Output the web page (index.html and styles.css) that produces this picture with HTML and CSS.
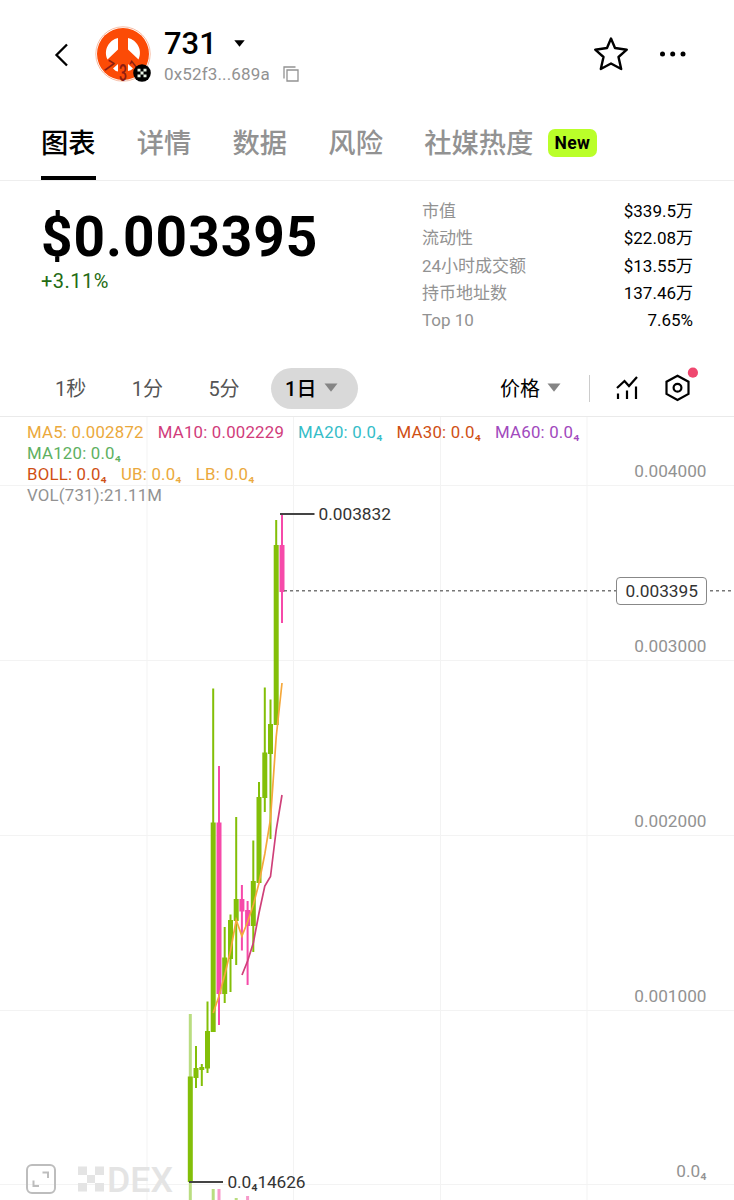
FILE: index.html
```html
<!DOCTYPE html>
<html lang="zh-CN">
<head>
  <meta charset="UTF-8">
  <meta name="viewport" content="width=device-width, initial-scale=1.0">
  <title>731 - DEX</title>
  <link rel="stylesheet" href="styles.css">
</head>
<body>
  <header class="header">
    <svg class="back" width="16" height="26" viewBox="0 0 16 26"><path d="M13 2.500 2.500 13 13 23.500"/></svg>
    <div class="avatar">
      <svg width="56" height="58" viewBox="0 0 56 58">
        <circle cx="28" cy="29" r="27.200" fill="none" stroke="#f4aa8c" stroke-width="0.800"/>
        <circle cx="28" cy="29" r="26" fill="#fc4b06"/>
        <path d="M23 13v11.500L12.500 34.500C8 25 14 15 23 13zM33 13v11.500l10.500 10C48 25 42 15 33 13z" fill="#fff"/>
        <path d="M18 43.500l5-4.500v7.500q-3-.5-5-3zM33 39l5 4.500q-2 2-5 2.500z" fill="#fff"/>
        <g class="avatar-digits">
          <text x="10" y="47" textLength="8" lengthAdjust="spacingAndGlyphs" transform="rotate(32 14 41)">7</text>
          <text class="mid" x="24" y="55.500" textLength="8" lengthAdjust="spacingAndGlyphs">3</text>
          <text x="36" y="46" textLength="7" lengthAdjust="spacingAndGlyphs" transform="rotate(-38 39 41)">1</text>
        </g>
      </svg>
      <svg class="chain" width="18" height="18" viewBox="0 0 18 18">
        <circle cx="9" cy="9" r="8.800" fill="#000"/>
        <path d="M4.500 4.800h3v2.700h-3zM10.500 4.800h3v2.700h-3zM7.500 7.500h3v3h-3zM4.500 10.500h3v2.700h-3zM10.500 10.500h3v2.700h-3z" fill="#e8f4e6"/>
      </svg>
    </div>
    <div class="token">
      <div class="token-name">731 <svg width="11" height="7" viewBox="0 0 11 7"><path d="M.3.300h10.400L5.500 6.800z"/></svg></div>
      <div class="token-address">0x52f3...689a
        <svg width="16" height="16" viewBox="0 0 16 16"><path d="M4 4h11v11H4zM1 12.500V1h11.500"/></svg>
      </div>
    </div>
    <svg class="star" width="36" height="36" viewBox="0 0 36 36"><path d="M18 2.500l4 9.500 11.800 1.700-8.300 7.300 2.700 12L18 27.500 7.800 33l2.700-12-8.300-7.300L14 12z"/></svg>
    <svg class="more" width="28" height="6" viewBox="0 0 28 6"><circle cx="3.500" cy="3" r="2.500"/><circle cx="13.700" cy="3" r="2.500"/><circle cx="24" cy="3" r="2.500"/></svg>
  </header>

  <nav class="tabs">
    <a class="tab active">图表</a>
    <a class="tab">详情</a>
    <a class="tab">数据</a>
    <a class="tab">风险</a>
    <a class="tab">社媒热度</a>
    <span class="badge">New</span>
  </nav>

  <section class="summary">
    <div>
      <div class="price">$0.003395</div>
      <div class="change">+3.11%</div>
    </div>
    <dl class="stats">
      <div><dt>市值</dt><dd>$339.5万</dd></div>
      <div><dt>流动性</dt><dd>$22.08万</dd></div>
      <div><dt>24小时成交额</dt><dd>$13.55万</dd></div>
      <div><dt>持币地址数</dt><dd>137.46万</dd></div>
      <div><dt>Top 10</dt><dd>7.65%</dd></div>
    </dl>
  </section>

  <div class="toolbar">
    <span class="period">1秒</span>
    <span class="period">1分</span>
    <span class="period">5分</span>
    <span class="period selected">1日 <svg width="14" height="9" viewBox="0 0 14 9"><path d="M.5.500h13L7 8.800z"/></svg></span>
    <span class="mode">价格 <svg width="14" height="9" viewBox="0 0 14 9"><path d="M.5.500h13L7 8.800z"/></svg></span>
    <span class="divider"></span>
    <svg class="tool indicator" width="24" height="26" viewBox="0 0 24 26"><path d="M2 13l7.500-7 4.500 5 8-9M3 18.500V24M12 15.500V24M21 11.500V24"/></svg>
    <svg class="tool settings" width="34" height="38" viewBox="0 0 34 38">
      <path d="M12.500 11.700 23.500 17.700v12.200L12.500 36 1.500 29.900V17.700z"/>
      <circle cx="12.500" cy="23.800" r="3.900"/>
      <circle class="dot" cx="27.900" cy="8.700" r="5.100"/>
    </svg>
  </div>

  <section class="chart">
    <svg class="plot" width="734" height="783" viewBox="0 417 734 783">
      <path class="grid" d="M147 417v783M293.500 417v783M440.500 417v783M587 417v783M0 485.500h734M0 660.500h734M0 835.500h734M0 1010.500h734M0 1184.500h734"/>

      <!-- watermark -->
      <g fill="#e4e4e4">
        <path d="M78 1166.500h9v8.500h-9zM95 1166.500h9v8.500h-9zM87 1175h8v8h-8zM78 1183h9v8.500h-9zM95 1183h9v8.500h-9z"/>
        <text class="watermark" x="107" y="1191.500" textLength="66" lengthAdjust="spacingAndGlyphs">DEX</text>
      </g>

      <!-- volume -->
      <g stroke-width="3">
        <path stroke="#b9dd80" d="M190.300 1014v186M213.200 1189v11M236.200 1198v2"/>
        <path stroke="#f79acb" d="M219 1189v11M247.600 1196v4"/>
      </g>

      <!-- candles: thin path is the wick, thick path the body -->
      <g class="up">
        <path class="wick" d="M196 1046v42M201.800 1064v22M207.500 1001.500v71.500M213.200 688.500V1032M224.700 927v76M230.500 914.500V992M236.200 817v148M253.300 840.500V952M259 782v101M264.800 687.500V812M270.500 699.500V839M276.200 520v205"/>
        <path class="body" d="M190.300 1076.500V1182M196 1068v10M201.800 1067v3M207.500 1031v37.500M213.200 822.500v209.500M224.700 957.500V994M230.500 920v39M236.200 899v22M253.300 881v45M259 797v86M264.800 752.500V798M270.500 724v30M276.200 545v180"/>
      </g>
      <g class="down">
        <path class="wick" d="M219 766v259M241.900 885v65.500M247.600 901v84M282 514v109"/>
        <path class="body" d="M219 822.500V994M241.900 899v12.500M247.600 910v16M282 545v47"/>
      </g>

      <polyline class="line" stroke="#f5a83c" points="213.200,1013 219,996 224.700,975 230.500,951 236.200,920 241.900,936 247.600,922 253.300,905 259,883 264.800,854 270.500,819 276.200,737 282,683"/>
      <polyline class="line" stroke="#cf4079" points="242,975 247.600,961 253.300,943 259,913 264.800,886 270.500,876.500 276.200,830 282,795"/>

      <path class="marker" d="M280 514h34.500M189 1182h34"/>
      <text class="value" x="318.500" y="520" textLength="72.500">0.003832</text>
      <text class="value" x="227.500" y="1188" textLength="78">0.0₄14626</text>

      <path class="current" d="M284 590.800h450"/>
      <rect x="616.500" y="577.500" width="90" height="27" rx="3.500" fill="#fff" stroke="#888"/>
      <text class="value" x="625.500" y="597" textLength="72.500">0.003395</text>

      <g class="axis">
        <text x="706.500" y="477">0.004000</text>
        <text x="706.500" y="652">0.003000</text>
        <text x="706.500" y="827">0.002000</text>
        <text x="706.500" y="1002">0.001000</text>
        <text x="706.500" y="1177">0.0₄</text>
      </g>

      <!-- fullscreen button -->
      <g fill="none" stroke="#bdbdbd" stroke-width="2">
        <rect x="27" y="1165" width="28" height="28" rx="5"/>
        <path d="M42.500 1172.500h5.500v5.500M33.500 1180.500v5.500h5.500"/>
      </g>
    </svg>

    <div class="legend">
      <div class="legend-row">
        <span class="ma5">MA5: 0.002872</span>
        <span class="ma10">MA10: 0.002229</span>
        <span class="ma20">MA20: 0.0₄</span>
        <span class="ma30">MA30: 0.0₄</span>
        <span class="ma60">MA60: 0.0₄</span>
      </div>
      <div class="legend-row"><span class="ma120">MA120: 0.0₄</span></div>
      <div class="legend-row">
        <span class="ma30">BOLL: 0.0₄</span>
        <span class="ma5">UB: 0.0₄</span>
        <span class="ma5">LB: 0.0₄</span>
      </div>
      <div class="legend-row"><span class="vol">VOL(731):21.11M</span></div>
    </div>
  </section>
</body>
</html>
```
FILE: styles.css
```css
* {
    box-sizing: border-box;
}

body {
    margin: 0;
    width: 734px;
    height: 1200px;
    overflow: hidden;
    background: #fff;
    color: #000;
    font-family: Roboto, "Noto Sans CJK SC", sans-serif;
}

svg {
    display: block;
    flex: none;
}

.header {
    display: flex;
    align-items: center;
    height: 108px;
    padding: 0 47px 0 54px;
}

.back {
    margin-top: 2px;
}

.back path {
    fill: none;
    stroke: #000;
    stroke-width: 2.3;
}

.avatar {
    position: relative;
    margin-left: 25px;
}

.avatar-digits {
    fill: #8c1d12;
    font: 500 16px Roboto, sans-serif;
}

.avatar-digits .mid {
    font-size: 23px;
}

.chain {
    position: absolute;
    right: 0;
    bottom: 1px;
}

.token {
    margin-left: 13px;
    padding-top: 3px;
}

.token-name {
    display: flex;
    align-items: center;
    gap: 17px;
    height: 36px;
    font-size: 31px;
    font-weight: 500;
}

.token-address {
    display: flex;
    align-items: center;
    gap: 13px;
    height: 24px;
    color: #929292;
    font-size: 17px;
    letter-spacing: 0.15px;
}

.token-address path {
    fill: none;
    stroke: #929292;
    stroke-width: 1.3;
}

.star {
    margin-left: auto;
}

.star path {
    fill: none;
    stroke: #000;
    stroke-width: 2.4;
    stroke-linejoin: round;
}

.more {
    margin-left: 30px;
}

.tabs {
    display: flex;
    height: 73px;
    padding-left: 41px;
    border-bottom: 1px solid #eee;
}

.tab {
    height: 72px;
    margin-right: 41.2px;
    color: #929292;
    font-size: 27.3px;
    font-weight: 500;
    line-height: 72px;
}

.tab.active {
    border-bottom: 4px solid #000;
    color: #000;
}

.badge {
    height: 28px;
    margin: 21px 0 0 -27px;
    padding: 0 7px;
    border-radius: 7px;
    background: #baff29;
    font-size: 17.5px;
    font-weight: 700;
    line-height: 28px;
    letter-spacing: 0.3px;
}

.summary {
    display: flex;
    justify-content: space-between;
    height: 179px;
    padding: 16px 41px 0;
}

.price {
    height: 72px;
    font-size: 55px;
    font-weight: 700;
    line-height: 80px;
    letter-spacing: 1px;
}

.change {
    color: #236b12;
    font-size: 20px;
    line-height: 24px;
    letter-spacing: 0.5px;
}

.stats {
    width: 271px;
    margin: 1px 0 0;
    font-size: 17px;
}

.stats div {
    display: flex;
    justify-content: space-between;
    height: 27.3px;
    line-height: 27.3px;
}

.stats dt {
    color: #929292;
}

.stats dd {
    margin: 0;
}

.toolbar {
    display: flex;
    align-items: center;
    height: 57px;
    padding-left: 55px;
    border-bottom: 1px solid #eaeaea;
    font-size: 20px;
}

.period {
    width: 76.7px;
    padding-bottom: 2px;
    color: #555;
}

.period.selected {
    display: flex;
    align-items: center;
    justify-content: space-between;
    width: 87px;
    height: 41px;
    margin-left: -14px;
    padding: 0 20px 2px 14px;
    border-radius: 21px;
    background: #d9d9d9;
    color: #000;
    font-weight: 500;
}

.mode {
    display: flex;
    align-items: center;
    gap: 7px;
    margin-left: 142px;
    padding-bottom: 2px;
}

.period path,
.mode path {
    fill: #858585;
}

.divider {
    width: 1px;
    height: 27px;
    margin-left: 28px;
    background: #ccc;
}

.tool {
    fill: none;
    stroke: #000;
    stroke-width: 2.2;
}

.indicator {
    margin-left: 25px;
}

.settings {
    margin: -10px 0 0 26px;
}

.settings .dot {
    fill: #ef476f;
    stroke: none;
}

.chart {
    position: relative;
}

.legend {
    position: absolute;
    top: 5px;
    left: 27px;
    font-size: 16.8px;
    letter-spacing: 0.22px;
}

.legend-row {
    display: flex;
    gap: 14px;
    height: 21px;
    line-height: 21px;
    white-space: nowrap;
}

.ma5 { color: #eba93c; }
.ma10 { color: #d13c7b; }
.ma20 { color: #35bdc8; }
.ma30 { color: #cf5014; }
.ma60 { color: #a149bd; }
.ma120 { color: #5eb061; }
.vol { color: #929292; }

.grid {
    stroke: #f3f3f3;
}

.wick {
    stroke-width: 2;
}

.body {
    stroke-width: 5;
}

.up {
    stroke: #83bf08;
}

.down {
    stroke: #f64aa9;
}

.line {
    fill: none;
    stroke-width: 1.7;
}

.marker {
    stroke: #444;
    stroke-width: 2;
}

.current {
    stroke: #777;
    stroke-width: 1.4;
    stroke-dasharray: 3 3;
}

.value {
    fill: #333;
    font-size: 17.3px;
}

.axis {
    fill: #929292;
    font-size: 17.2px;
    text-anchor: end;
}

.watermark {
    font-size: 35px;
    font-weight: 500;
}
```
